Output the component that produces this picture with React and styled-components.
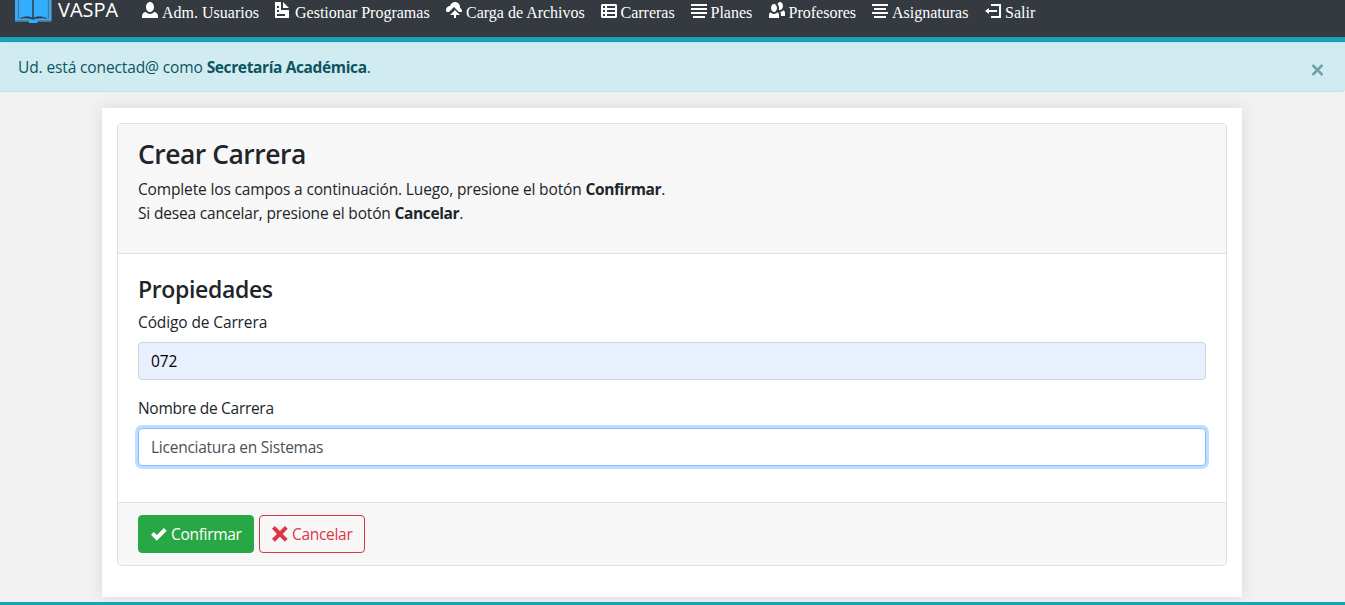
import React from "react";
import styled, { createGlobalStyle } from "styled-components";

const Global = createGlobalStyle`
  *, *::before, *::after { box-sizing: border-box; }
  html, body { margin: 0; padding: 0; }
  body {
    height: 605px;
    overflow: hidden;
    background: #f1f1f1;
    color: #212529;
    font: 400 15.5px/24px "Open Sans", "Noto Sans", sans-serif;
  }
`;

const Page = styled.div`
  display: flex;
  flex-direction: column;
  height: 605px;
  overflow: hidden;
`;

const Navbar = styled.nav`
  display: flex;
  align-items: flex-start;
  flex: none;
  height: 42px;
  padding-left: 14px;
  background: #343a40;
  border-bottom: 5px solid #17a2b8;
`;

const Brand = styled.a`
  display: flex;
  align-items: flex-start;
  width: 120px;
  height: 37px;
  color: #fff;
  font-size: 20px;
  line-height: 20px;
  white-space: nowrap;

  svg { flex: none; margin-right: 6px; }
`;

const NavItem = styled.a`
  display: flex;
  flex: none;
  width: ${(p) => p.$width}px;
  padding-left: 8px;
  color: #fff;
  font: 16px/26px "Liberation Serif", "Times New Roman", serif;
  white-space: nowrap;

  svg { flex: none; margin: 2px 4px 0 0; }
`;

const Alert = styled.div`
  display: flex;
  justify-content: space-between;
  flex: none;
  height: 50px;
  padding: 12px 20px 0 17px;
  color: #0c5460;
  background: #d1ecf1;
  border: 1px solid #bee5eb;
  border-width: 1px 0 1px 1px;
  border-left-color: #d1ecf1;
  border-radius: 0 0 4px 0;
`;

const Text = styled.span`
  letter-spacing: ${(p) => p.$track || 0}px;
  white-space: nowrap;
`;

const Strong = styled.b`
  font-weight: 700;
  letter-spacing: -0.37px;
`;

const Close = styled.button`
  display: flex;
  margin: 9px 2px 0 0;
  padding: 0;
  height: 12px;
  border: 0;
  background: none;
  color: #6fa1aa;
`;

const Container = styled.main`
  flex: none;
  width: 1140px;
  height: 489px;
  margin: 16px 0 0 102px;
  padding: 15px;
  background: #fff;
  box-shadow: 0 0 14px rgba(0, 0, 0, 0.1);
`;

const Card = styled.form`
  display: flex;
  flex-direction: column;
  height: 443px;
  border: 1px solid #dfdfdf;
  border-radius: 4px;
  overflow: hidden;
`;

const CardHeader = styled.header`
  height: 130px;
  padding: 12px 20px;
  background: #f7f7f7;
  border-bottom: 1px solid #dfdfdf;
`;

const CardBody = styled.section`
  height: 249px;
  padding: 20px 20px 0;
`;

const CardFooter = styled.footer`
  display: flex;
  flex: 1;
  gap: 5px;
  padding: 12px 20px;
  background: #f7f7f7;
  border-top: 1px solid #dfdfdf;
`;

const Title = styled.h3`
  margin: 1px 0 6px;
  font-size: 26.5px;
  font-weight: 600;
  line-height: 34px;
`;

const Subtitle = styled.h4`
  margin: 1px 0 6px;
  font-size: 23px;
  font-weight: 600;
  line-height: 29px;
`;

const Paragraph = styled.p`
  margin: 0;
`;

const Field = styled.div`
  margin-bottom: 16px;
`;

const Label = styled.label`
  display: block;
  margin-bottom: 8px;
  height: 24px;
`;

const Input = styled.input`
  display: block;
  width: 100%;
  height: 38px;
  padding: 6px 12px;
  color: ${(p) => (p.$active ? "#495057" : "#000")};
  background: ${(p) => (p.$active ? "#fff" : "#e8f0fe")};
  border: 1px solid ${(p) => (p.$active ? "#80bdff" : "#ced4da")};
  border-radius: 4px;
  outline: 0;
  box-shadow: ${(p) => (p.$active ? "0 0 0 3px #bfdeff" : "none")};
  font: inherit;
  letter-spacing: ${(p) => p.$track || 0}px;
`;

const Button = styled.button`
  display: flex;
  width: ${(p) => p.$width}px;
  height: 38px;
  padding: 6px 11px 6px 12px;
  color: ${(p) => (p.$outline ? "#dc3545" : "#fff")};
  background: ${(p) => (p.$outline ? "transparent" : "#28a745")};
  border: 1px solid ${(p) => (p.$outline ? "#dc3545" : "#28a745")};
  border-radius: 4px;
  font: inherit;

  svg { flex: none; margin: 4px 4px 0 0; }
`;

const BottomBar = styled.div`
  flex: none;
  height: 3px;
  margin-top: 5px;
  background: #17a2b8;
`;

const PATHS = {
  person:
    "M4 0c-1.1 0-2 1.12-2 2.5s.9 2.5 2 2.5 2-1.12 2-2.5-.9-2.5-2-2.5zm-2.09 5c-1.06.05-1.91.92-1.91 2v1h8v-1c0-1.08-.84-1.95-1.91-2-.54.61-1.28 1-2.09 1-.81 0-1.55-.39-2.09-1z",
  document:
    "M0 0v8h7v-4h-4v-4h-3zm4 0v3h3l-3-3zm-3 2h1v1h-1v-1zm0 2h1v1h-1v-1zm0 2h4v1h-4v-1z",
  upload:
    "M4.5 0c-1.21 0-2.27.86-2.5 2-1.1 0-2 .9-2 2 0 .37.11.71.28 1h1.22l2.5-2.5 2.5 2.5h1.41c.06-.16.09-.32.09-.5 0-.65-.42-1.29-1-1.5v-.5c0-1.38-1.12-2.5-2.5-2.5zm0 4l-2.5 2.5h2v1.5h1v-1.5h2l-2.5-2.5z",
  sheet:
    "M.75 1c-.41 0-.75.34-.75.75v5.5c0 .41.34.75.75.75h6.5c.41 0 .75-.34.75-.75v-5.5c0-.41-.34-.75-.75-.75h-6.5zm.25 1h1v1h-1v-1zm2 0h4v1h-4v-1zm-2 2h1v1h-1v-1zm2 0h4v1h-4v-1zm-2 2h1v1h-1v-1zm2 0h4v1h-4v-1z",
  justify: "M0 1h8v1h-8zM0 3h8v1h-8zM0 5h8v1h-8zM1 7h6v1h-6z",
  center: "M0 1h8v1h-8zM1 3h6v1h-6zM0 5h8v1h-8zM1 7h6v1h-6z",
  people:
    "M5.5 0c-.51 0-.95.35-1.22.88.45.54.72 1.28.72 2.13 0 .29-.03.55-.09.81.19.11.38.19.59.19.83 0 1.5-.9 1.5-2s-.67-2-1.5-2zm-3 1c-.83 0-1.5.9-1.5 2s.67 2 1.5 2 1.5-.9 1.5-2-.67-2-1.5-2zm4.75 3.16c-.43.51-1.02.82-1.69.84.27.38.44.84.44 1.34v.66h2v-1.66c0-.52-.31-.97-.75-1.19zm-6.5 1c-.44.22-.75.67-.75 1.19v1.66h5v-1.66c0-.52-.31-.97-.75-1.19-.45.53-1.06.84-1.75.84s-1.3-.32-1.75-.84z",
  logout: "M3 1v1h4v5h-4v1h5v-7h-5zm-1 2l-2 1.5 2 1.5v-1h4v-1h-4v-1z",
  check:
    "M6.41 1l-.69.72-2.78 2.78-.81-.78-.72-.72-1.41 1.41.72.72 1.5 1.5.69.72.72-.72 3.5-3.5.72-.72-1.44-1.41z",
  x: "M1.41 0l-1.41 1.41.72.72 1.78 1.81-1.78 1.78-.72.69 1.41 1.44.72-.72 1.81-1.81 1.78 1.81.69.72 1.44-1.44-.72-.69-1.81-1.78 1.81-1.81.72-.72-1.44-1.41-.69.72-1.78 1.78-1.81-1.78-.72-.72z",
};

const Icon = ({ name }) => (
  <svg width="16" height="16" viewBox="0 0 8 8" fill="currentColor" aria-hidden="true">
    <path d={PATHS[name]} />
  </svg>
);

const BookLogo = () => (
  <svg width="38" height="23" viewBox="0 0 38 23" aria-hidden="true">
    <path d="M1 0H37.500V21.500H23.500V23H15V21.500H1Z" fill="#33adff" />
    <path d="M4.500 0V18.500M34.500 0V18.500M1 21H14.500M24 21H37.500" fill="none" stroke="#56738c" strokeWidth="1.300" />
    <path d="M19 0V18" fill="none" stroke="#343a40" strokeWidth="1.500" />
    <path d="M6 18.500C11 16 16 16 19 18.500C22 16 28 16 33 18.500C28 17.800 23 18 19 19.500C15 18 10 17.800 6 18.500Z" fill="#343a40" stroke="#343a40" strokeWidth="0.500" />
  </svg>
);

const NAV = [
  ["person", "Adm. Usuarios", 133],
  ["document", "Gestionar Programas", 171],
  ["upload", "Carga de Archivos", 154.5],
  ["sheet", "Carreras", 90],
  ["justify", "Planes", 78],
  ["people", "Profesores", 103.5],
  ["center", "Asignaturas", 113],
  ["logout", "Salir", 70],
];

export default function App() {
  return (
    <Page>
      <Global />
      <Navbar>
        <Brand><BookLogo /><Text>VASPA</Text></Brand>
        {NAV.map(([icon, label, width]) => (
          <NavItem key={label} $width={width}>
            <Icon name={icon} />
            <Text>{label}</Text>
          </NavItem>
        ))}
      </Navbar>
      <Alert>
        <Text $track={-0.12}>Ud. está conectad@ como <Strong>Secretaría Académica</Strong>.</Text>
        <Close aria-label="Cerrar">
          <svg width="12" height="12" viewBox="0 0 12 12" stroke="currentColor" strokeWidth="2.5"><path d="M1.500 1L11.500 11M11.500 1L1.500 11" /></svg>
        </Close>
      </Alert>
      <Container>
        <Card>
          <CardHeader>
            <Title><Text $track={-0.5}>Crear Carrera</Text></Title>
            <Paragraph><Text $track={-0.15}>Complete los campos a continuación. Luego, presione el botón <Strong>Confirmar</Strong>.</Text></Paragraph>
            <Paragraph><Text $track={-0.18}>Si desea cancelar, presione el botón <Strong>Cancelar</Strong>.</Text></Paragraph>
          </CardHeader>
          <CardBody>
            <Subtitle><Text $track={-0.35}>Propiedades</Text></Subtitle>
            <Field>
              <Label><Text $track={-0.12}>Código de Carrera</Text></Label>
              <Input defaultValue="072" $track={-0.1} />
            </Field>
            <Field>
              <Label><Text $track={-0.3}>Nombre de Carrera</Text></Label>
              <Input $active defaultValue="Licenciatura en Sistemas" $track={-0.25} />
            </Field>
          </CardBody>
          <CardFooter>
            <Button type="button" $width={116}><Icon name="check" /><Text $track={-0.3}>Confirmar</Text></Button>
            <Button type="button" $width={106} $outline><Icon name="x" /><Text $track={-0.3}>Cancelar</Text></Button>
          </CardFooter>
        </Card>
      </Container>
      <BottomBar />
    </Page>
  );
}
